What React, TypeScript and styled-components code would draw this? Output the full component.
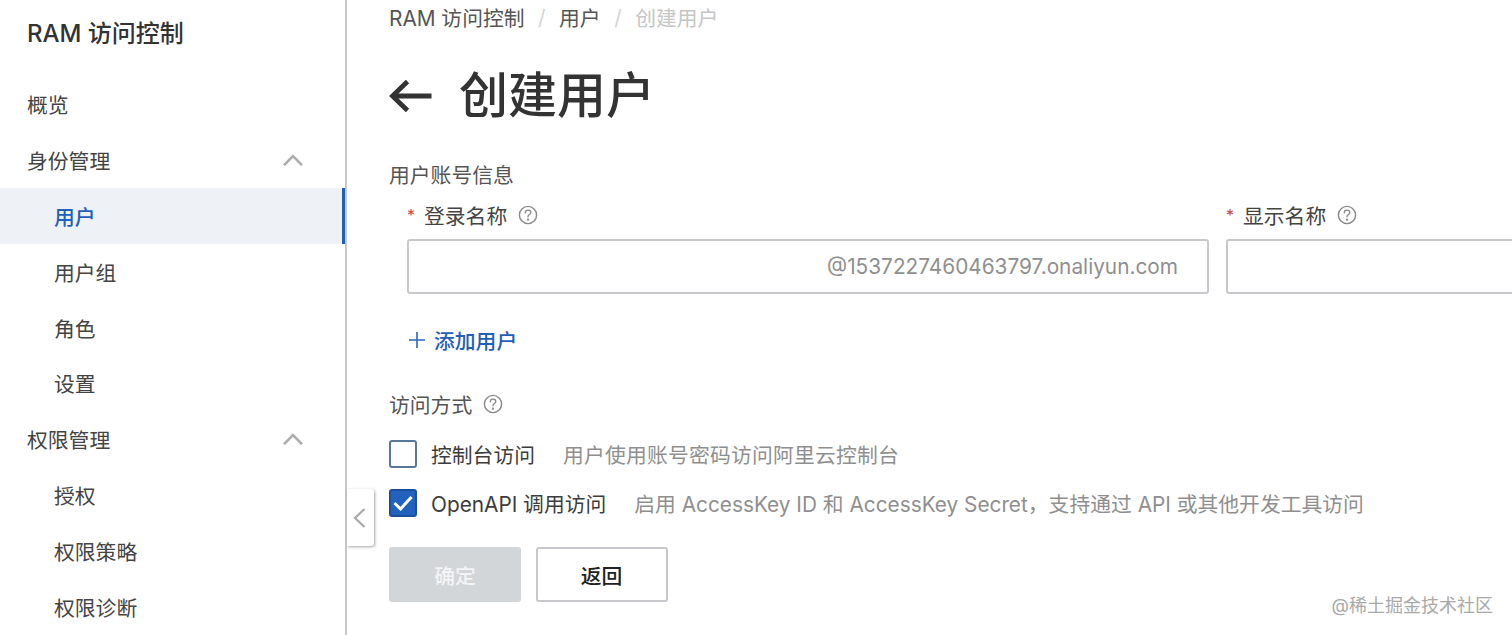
import { createGlobalStyle, styled } from 'styled-components';

const GlobalStyle = createGlobalStyle`
	html, body {
		margin: 0;
		padding: 0;
		background: #fff;
		overflow: hidden;
	}
	body {
		font-family: Inter, 'Noto Sans CJK SC', sans-serif;
		color: #3b3b3b;
	}
`;

const navItems = [
	{ label: '概览', level: 0 },
	{ label: '身份管理', level: 0, open: true },
	{ label: '用户', level: 1, active: true },
	{ label: '用户组', level: 1 },
	{ label: '角色', level: 1 },
	{ label: '设置', level: 1 },
	{ label: '权限管理', level: 0, open: true },
	{ label: '授权', level: 1 },
	{ label: '权限策略', level: 1 },
	{ label: '权限诊断', level: 1 },
];

const Help = () => (
	<HelpIcon width="20" height="20" viewBox="0 0 20 20" fill="none" stroke="#8a8a8a" strokeWidth="1.4">
		<circle cx="10" cy="10" r="8.6" />
		<path d="M7.3 7.8c0-1.6 1.2-2.7 2.8-2.7s2.7 1 2.7 2.4c0 2.1-2.8 2-2.8 4.3" strokeLinecap="round" />
		<circle cx="10" cy="14.6" r="0.5" fill="#8a8a8a" />
	</HelpIcon>
);

const App = () => {
	return (
		<>
			<GlobalStyle />
			<Page>
				<Sidebar>
					<SidebarTitle>RAM 访问控制</SidebarTitle>
					{navItems.map((item) => (
						<NavItem key={item.label} $level={item.level} $active={item.active}>
							{item.label}
							{item.open && (
								<svg width="20" height="12" viewBox="0 0 20 12" fill="none" stroke="#adadad" strokeWidth="2.6">
									<path d="M1 11.2 10 2.2l9 9" />
								</svg>
							)}
						</NavItem>
					))}
					<CollapseHandle>
						<svg width="13" height="20" viewBox="0 0 13 20" fill="none" stroke="#a8a8a8" strokeWidth="2.2">
							<path d="M11.5 1 2 10l9.5 9" />
						</svg>
					</CollapseHandle>
				</Sidebar>
				<Main>
					<Breadcrumb>
						<span>RAM 访问控制</span>
						<Slash>/</Slash>
						<span>用户</span>
						<Slash>/</Slash>
						<CrumbCurrent>创建用户</CrumbCurrent>
					</Breadcrumb>
					<Heading>
						<svg width="43" height="34" viewBox="0 0 43 34" fill="none" stroke="#333" strokeWidth="4.8">
							<path d="M42.5 17H5" />
							<path d="M18.5 2.5 3.5 17l15 14.5" />
						</svg>
						<h1>创建用户</h1>
					</Heading>
					<SectionLabel>用户账号信息</SectionLabel>
					<FieldRow>
						<Field $width={802}>
							<FieldLabel>
								<Star>*</Star>
								登录名称
								<Help />
							</FieldLabel>
							<InputBox>@1537227460463797.onaliyun.com</InputBox>
						</Field>
						<Field $width={400}>
							<FieldLabel>
								<Star>*</Star>
								显示名称
								<Help />
							</FieldLabel>
							<InputBox />
						</Field>
					</FieldRow>
					<AddUser>
						<svg width="18" height="18" viewBox="0 0 18 18" stroke="#2a66bd" strokeWidth="1.6">
							<path d="M9 1v16M1 9h16" />
						</svg>
						添加用户
					</AddUser>
					<AccessTitle>
						访问方式
						<Help />
					</AccessTitle>
					<CheckRow $top={21}>
						<CheckBox />
						<CheckLabel>控制台访问</CheckLabel>
						<CheckHint $spacing={0.2}>用户使用账号密码访问阿里云控制台</CheckHint>
					</CheckRow>
					<CheckRow $top={21}>
						<CheckBox $checked>
							<svg width="20" height="16" viewBox="0 0 20 16" fill="none" stroke="#fff" strokeWidth="3">
								<path d="M1.5 8 7.5 14 18.5 2" />
							</svg>
						</CheckBox>
						<CheckLabel>OpenAPI 调用访问</CheckLabel>
						<CheckHint>启用 AccessKey ID 和 AccessKey Secret，支持通过 API 或其他开发工具访问</CheckHint>
					</CheckRow>
					<Actions>
						<Button disabled>确定</Button>
						<Button>返回</Button>
					</Actions>
				</Main>
				<Watermark>@稀土掘金技术社区</Watermark>
			</Page>
		</>
	);
};

const Page = styled.div`
	position: relative;
	display: flex;
	width: 1512px;
	height: 635px;
	overflow: hidden;
	font-size: 20.8px;
`;

const Sidebar = styled.nav`
	position: relative;
	flex: 0 0 345px;
	border-right: 2px solid #c9c9c9;
`;

const SidebarTitle = styled.div`
	height: 67px;
	margin-bottom: 9px;
	padding-left: 27px;
	font-size: 24px;
	font-weight: 500;
	line-height: 67px;
	color: #333;
`;

const NavItem = styled.div<{ $level: number; $active?: boolean }>`
	display: flex;
	align-items: center;
	justify-content: space-between;
	box-sizing: border-box;
	height: 55.9px;
	padding: 0 42px 0 ${(p) => (p.$level ? 54 : 27)}px;
	color: ${(p) => (p.$active ? '#1f60bb' : '#444')};
	font-weight: ${(p) => (p.$active ? 500 : 400)};
	background: ${(p) => (p.$active ? '#eef2f7' : 'transparent')};
	border-right: ${(p) => (p.$active ? '3px solid #1f5fb8' : '0')};
`;

const CollapseHandle = styled.div`
	position: absolute;
	top: 489px;
	left: 347px;
	display: flex;
	align-items: center;
	justify-content: center;
	width: 27px;
	height: 57px;
	padding-right: 3px;
	box-sizing: border-box;
	background: #fff;
	border-radius: 0 3px 3px 0;
	box-shadow: 1px 1px 3px rgba(0, 0, 0, 0.35);
`;

const Main = styled.main`
	flex: 1;
	min-width: 0;
	padding-left: 42px;
`;

const Breadcrumb = styled.div`
	display: flex;
	align-items: center;
	height: 34px;
	color: #555;
`;

const Slash = styled.span`
	margin: 0 13.5px;
	color: #d4d4d4;
`;

const CrumbCurrent = styled.span`
	color: #c6c6c6;
`;

const Heading = styled.div`
	display: flex;
	align-items: center;
	gap: 27px;
	height: 78px;
	margin-top: 23px;

	h1 {
		margin: 0;
		font-size: 49px;
		font-weight: 500;
		line-height: 78px;
		color: #333;
	}
`;

const SectionLabel = styled.div`
	height: 30px;
	margin-top: 26px;
	line-height: 30px;
	color: #555;
`;

const FieldRow = styled.div`
	display: flex;
	gap: 17px;
	margin-left: 18px;
	margin-top: 9px;
`;

const Field = styled.div<{ $width: number }>`
	flex: 0 0 ${(p) => p.$width}px;
`;

const FieldLabel = styled.div`
	display: flex;
	align-items: center;
	height: 30px;
	color: #444;
`;

const Star = styled.span`
	width: 17px;
	color: #d0433a;
	font-size: 16px;
`;

const HelpIcon = styled.svg`
	margin-left: 11px;
`;

const InputBox = styled.div`
	box-sizing: border-box;
	height: 55px;
	margin-top: 9px;
	padding-right: 29px;
	border: 2px solid #c6c8cb;
	border-radius: 3px;
	color: #8f8f8f;
	line-height: 51px;
	text-align: right;
`;

const AddUser = styled.div`
	display: flex;
	align-items: center;
	gap: 8px;
	height: 30px;
	margin: 31px 0 0 19px;
	color: #1f60bb;
	font-weight: 500;
`;

const AccessTitle = styled.div`
	display: flex;
	align-items: center;
	height: 30px;
	margin-top: 34px;
	color: #555;
`;

const CheckRow = styled.div<{ $top: number }>`
	display: flex;
	align-items: center;
	height: 28px;
	margin-top: ${(p) => p.$top}px;
`;

const CheckBox = styled.span<{ $checked?: boolean }>`
	display: flex;
	align-items: center;
	justify-content: center;
	box-sizing: border-box;
	width: 28px;
	height: 28px;
	border: 2px solid ${(p) => (p.$checked ? '#1c4f9a' : '#56789f')};
	border-radius: 3px;
	background: ${(p) => (p.$checked ? '#2261bd' : '#fff')};
`;

const CheckLabel = styled.span`
	margin-left: 14px;
	color: #3d3d3d;
`;

const CheckHint = styled.span<{ $spacing?: number }>`
	margin-left: 28px;
	color: #8f8f8f;
	letter-spacing: ${(p) => p.$spacing ?? 0}px;
`;

const Actions = styled.div`
	display: flex;
	gap: 14.5px;
	margin-top: 30px;
`;

const Button = styled.button`
	box-sizing: border-box;
	width: 132px;
	height: 55px;
	padding: 0;
	border: ${(p) => (p.disabled ? '0' : '2px solid #c6c8cb')};
	border-radius: 3px;
	background: ${(p) => (p.disabled ? '#d2d6d9' : '#fff')};
	color: ${(p) => (p.disabled ? '#f3f4f5' : '#222')};
	font: inherit;
	font-weight: 500;
`;

const Watermark = styled.div`
	position: absolute;
	right: 19px;
	bottom: 18px;
	color: #a9a9a9;
	font-size: 18px;
`;

export default App;
